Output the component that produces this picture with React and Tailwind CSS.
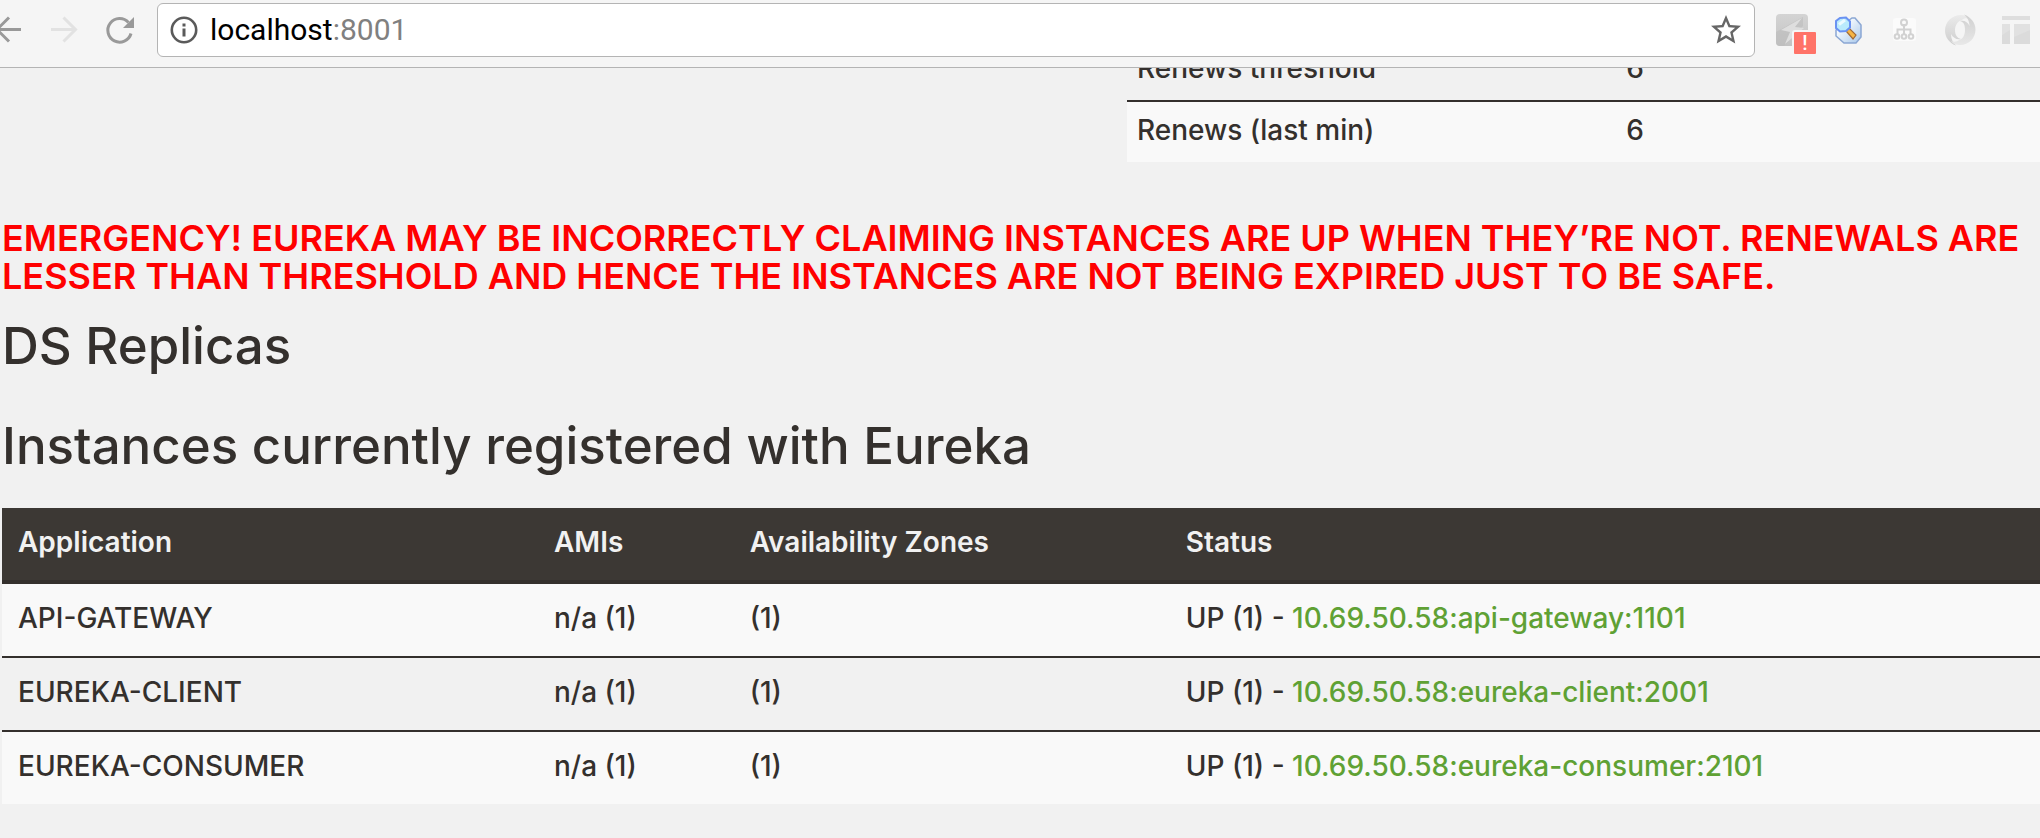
import { MdStarBorder } from "react-icons/md";

const instances = [
  { app: "API-GATEWAY", link: "10.69.50.58:api-gateway:1101" },
  { app: "EUREKA-CLIENT", link: "10.69.50.58:eureka-client:2001" },
  { app: "EUREKA-CONSUMER", link: "10.69.50.58:eureka-consumer:2101" },
];

function IconButton({ label, children }) {
  return (
    <button type="button" aria-label={label} className="relative size-8 shrink-0">
      {children}
    </button>
  );
}

function BackIcon() {
  return (
    <svg viewBox="0 0 32 32" className="size-8 fill-none stroke-[#999999] stroke-3">
      <path d="M29 15.5H6M17 3.5 5 15.5l12 12" />
    </svg>
  );
}

function ForwardIcon() {
  return (
    <svg viewBox="0 0 32 32" className="size-8 fill-none stroke-[#e2e2e2] stroke-3">
      <path d="M3 15.5h24M15.500 3.500l12 12-12 12" />
    </svg>
  );
}

function ReloadIcon() {
  return (
    <svg viewBox="0 0 32 32" className="size-8">
      <path d="M27 19.500A11.800 11.800 0 1 1 24.500 8.500" fill="none" stroke="#999999" strokeWidth="3" />
      <path d="M30 3v11H19z" fill="#999999" />
    </svg>
  );
}

function InfoIcon() {
  return (
    <svg viewBox="0 0 28 28" className="size-7 shrink-0">
      <circle cx="14" cy="14" r="12.200" fill="none" stroke="#5a5a5a" strokeWidth="2.600" />
      <path d="M12.500 7.500h3v3h-3zM12.500 12.500h3v8h-3z" fill="#5a5a5a" />
    </svg>
  );
}

function BoltIcon() {
  return (
    <svg viewBox="0 0 32 32" className="size-8">
      <defs>
        <linearGradient id="bolt" x1="0" y1="0" x2="0" y2="1">
          <stop offset="0" stopColor="#d4d4d4" />
          <stop offset="1" stopColor="#c3c3c3" />
        </linearGradient>
      </defs>
      <rect width="32" height="32" rx="4" fill="url(#bolt)" />
      <path d="M0 18 27 3v9L8 32H4a4 4 0 0 1-4-4z" fill="#bdbdbd" opacity=".6" />
      <path d="M26 4 5 16l9 2-5 12 19-16-9-1z" fill="#dedede" />
    </svg>
  );
}

function SearchPageIcon() {
  return (
    <svg viewBox="0 0 32 32" className="size-8">
      <defs>
        <linearGradient id="sheet" x1="0" y1="0" x2="1" y2="1">
          <stop offset="0.300" stopColor="#f6fafd" />
          <stop offset="1" stopColor="#a5c6ea" />
        </linearGradient>
      </defs>
      <path d="M4 16v6l8 7h12l5-6V11l-6-7h-3z" fill="url(#sheet)" stroke="#8ba7d3" strokeWidth="1.500" />
      <path d="m14 17 3-3 7 7-3 4z" fill="#f6b544" stroke="#a06a38" strokeWidth="1.200" />
      <path d="m8 4 6-.5 4 4v6L14 17l-6 .5L4 14V7z" fill="#b9eafc" stroke="#6a92f2" strokeWidth="2" />
      <path d="M7 10.500 13 6" stroke="#ecfaff" strokeWidth="3" />
    </svg>
  );
}

function TreeIcon() {
  return (
    <svg viewBox="0 0 32 32" className="size-8">
      <rect x="5" y="4" width="23" height="23" rx="3" fill="#fbfbfb" />
      <g fill="none" stroke="#d2d2d2" strokeWidth="2">
        <circle cx="16" cy="8.500" r="3" />
        <path d="M16 10v10M9.500 20v-4.500h13V20" />
        <circle cx="9" cy="22.500" r="2.300" />
        <circle cx="16" cy="22.500" r="2.300" />
        <circle cx="23" cy="22.500" r="2.300" />
      </g>
    </svg>
  );
}

function SwirlIcon() {
  return (
    <svg viewBox="0 0 32 32" className="size-8">
      <defs>
        <linearGradient id="swirlA" x1="0" y1="0" x2="0" y2="1">
          <stop offset="0" stopColor="#cfcfcf" />
          <stop offset="1" stopColor="#e8e8e8" />
        </linearGradient>
        <linearGradient id="swirlB" x1="0" y1="0" x2="0" y2="1">
          <stop offset="0" stopColor="#ebebeb" />
          <stop offset="1" stopColor="#cdcdcd" />
        </linearGradient>
      </defs>
      <path
        d="M12 31.500C5 29 1 23 1 16.500 1 8 8 1 17 1c4 0 7 1 9 4-3-1-6-1-8 1-4 1-7 5-7 10s2 8 6 9c-4 1-8-1-10-5 0 5 2 9 5 11.500z"
        fill="url(#swirlB)"
      />
      <path
        d="M20 .5C27 3 31.500 9 31.500 15.500 31.500 24 25 31 16 31c-4 0-7-1-9-4 3 1 6 1 8-1 4-1 6-5 6-10s-1-8-5-9c4-1 8 1 9.500 5C25.500 7 23 3 20 .5z"
        fill="url(#swirlA)"
      />
    </svg>
  );
}

function LayoutIcon() {
  return (
    <svg viewBox="0 0 32 32" className="size-8">
      <path d="M2 2h28v4H2z" fill="#dedede" />
      <path d="M2 10h8v20H2zM14 10h16v20H14z" fill="#dbdbdb" />
      <path d="M14 10h16v6l-16 7zM2 10h8v6l-8 5z" fill="#e1e1e1" />
    </svg>
  );
}

function Toolbar() {
  return (
    <header className="relative z-10 flex h-[68px] items-start gap-[21px] border-b border-[#b4b4b4] bg-[#f5f5f5] pt-[3px] pr-2">
      <nav aria-label="History" className="-ml-2 flex h-[54px] items-center gap-6">
        <IconButton label="Back"><BackIcon /></IconButton>
        <IconButton label="Forward"><ForwardIcon /></IconButton>
        <IconButton label="Reload"><ReloadIcon /></IconButton>
      </nav>
      <div className="flex h-[54px] grow items-center rounded-[6px] border border-[#b4b4b4] bg-white px-[10px] font-[Roboto,sans-serif] text-[30px] leading-[40px] font-normal">
        <span className="pl-[2px]"><InfoIcon /></span>
        <input
          aria-label="Address"
          defaultValue="localhost"
          className="ml-3 [field-sizing:content] bg-transparent text-black outline-none"
        />
        <span className="grow text-[#808080]">:8001</span>
        <button type="button" aria-label="Bookmark this page" className="shrink-0 text-[#666666]">
          <MdStarBorder className="size-9" />
        </button>
      </div>
      <div className="flex h-[54px] items-center gap-6">
        <IconButton label="Extension with a warning">
          <BoltIcon />
          <span className="absolute top-4 left-4 flex size-[26px] items-center justify-center rounded-[3px] border-2 border-[#f5f5f5] bg-[#ff7368] font-[Roboto,sans-serif] text-[20px] leading-[22px] font-medium text-white">
            !
          </span>
        </IconButton>
        <IconButton label="Page search"><SearchPageIcon /></IconButton>
        <IconButton label="Site tree"><TreeIcon /></IconButton>
        <IconButton label="Swirl"><SwirlIcon /></IconButton>
        <IconButton label="Page layout"><LayoutIcon /></IconButton>
      </div>
    </header>
  );
}

export default function App() {
  return (
    <div className="min-h-screen overflow-hidden bg-[#f1f1f1] font-[Inter,sans-serif] font-medium text-[#34302d]">
      <Toolbar />
      <main className="-mt-7 pl-[2px]">
        <table aria-label="Renewals" className="ml-auto w-[44.8%] table-fixed border-collapse text-[28px] leading-[40px]">
          <tbody>
            <tr>
              <td className="w-[53.6%] px-[10px] pt-2 pb-3">Renews threshold</td>
              <td className="px-[10px] pt-2 pb-3">6</td>
            </tr>
            <tr className="border-t-2 border-[#34302d] bg-[#f9f9f9]">
              <td className="px-[10px] pt-2 pb-3">Renews (last min)</td>
              <td className="px-[10px] pt-2 pb-3">6</td>
            </tr>
          </tbody>
        </table>

        <p className="mt-[57px] text-[36px] leading-[38px] font-semibold whitespace-nowrap text-[#ff0000]">
          EMERGENCY! EUREKA MAY BE INCORRECTLY CLAIMING INSTANCES ARE UP WHEN THEY’RE NOT. RENEWALS ARE
          <br />
          LESSER THAN THRESHOLD AND HENCE THE INSTANCES ARE NOT BEING EXPIRED JUST TO BE SAFE.
        </p>

        <h1 className="mt-6 text-[51px] leading-[54px]">DS Replicas</h1>
        <h1 className="mt-[46px] text-[51px] leading-[54px]">
          Instances currently registered with Eureka
        </h1>

        <table aria-label="Instances" className="mt-[35px] w-full table-fixed border-collapse text-left text-[28px] leading-[40px]">
          <thead>
            <tr className="border-b-4 border-[#34302d] bg-[#3c3834] text-[#f1f1f1]">
              <th className="w-[26.3%] px-4 pt-[14px] pb-[18px] font-semibold">Application</th>
              <th className="w-[9.6%] px-4 pt-[14px] pb-[18px] font-semibold">AMIs</th>
              <th className="w-[21.4%] px-4 pt-[14px] pb-[18px] font-semibold">Availability Zones</th>
              <th className="px-4 pt-[14px] pb-[18px] font-semibold">Status</th>
            </tr>
          </thead>
          <tbody className="divide-y-2 divide-[#34302d]">
            {instances.map(({ app, link }) => (
              <tr key={app} className="odd:bg-[#f9f9f9]">
                <td className="px-4 pt-[14px] pb-[18px]">{app}</td>
                <td className="px-4 pt-[14px] pb-[18px]">n/a (1)</td>
                <td className="px-4 pt-[14px] pb-[18px]">(1)</td>
                <td className="px-4 pt-[14px] pb-[18px]">
                  UP (1) - <a href="#instance" className="text-[#5fa134]">{link}</a>
                </td>
              </tr>
            ))}
          </tbody>
        </table>
      </main>
    </div>
  );
}
